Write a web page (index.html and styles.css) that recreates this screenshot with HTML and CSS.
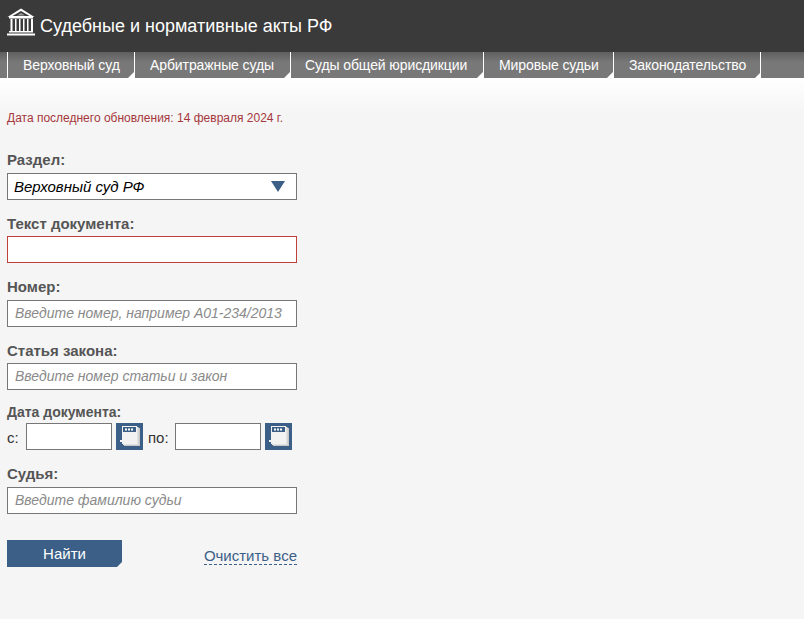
FILE: index.html
```html
<!DOCTYPE html>
<html lang="ru">
<head>
<meta charset="utf-8">
<title>Судебные и нормативные акты РФ</title>
<link rel="stylesheet" href="styles.css">
</head>
<body>
<header class="top">
  <svg class="logo" width="28" height="28" viewBox="0 0 28 28" aria-hidden="true">
    <path d="M14 .5 27.5 9H.5Z" fill="#fff"/>
    <path d="M14 3 22.5 8H5.500Z" fill="#3a3a3a"/>
    <path d="M14 5 18 7.500H10Z" fill="#fff" opacity=".5"/>
    <rect x="2" y="9" width="24" height="1.500" fill="#fff"/>
    <g fill="#fff">
      <rect x="3.500" y="11" width="2" height="12"/>
      <rect x="8" y="11" width="1.500" height="12"/>
      <rect x="12" y="11" width="1.500" height="12"/>
      <rect x="16" y="11" width="1.500" height="12"/>
      <rect x="20" y="11" width="1.500" height="12"/>
      <rect x="24" y="11" width="2" height="12"/>
      <rect x="2" y="23" width="24" height="1.500"/>
      <rect x="0" y="25.500" width="28" height="2"/>
    </g>
  </svg>
  <h1 class="title">Судебные и нормативные акты РФ</h1>
</header>
<nav class="nav">
  <a class="tab tab-1">Верховный суд</a>
  <a class="tab tab-2">Арбитражные суды</a>
  <a class="tab tab-3">Суды общей юрисдикции</a>
  <a class="tab tab-4">Мировые судьи</a>
  <a class="tab tab-5">Законодательство</a>
</nav>
<main class="content">
  <p class="updated">Дата последнего обновления: 14 февраля 2024 г.</p>
  <form class="form">
    <div class="field field-first">
      <label class="label">Раздел:</label>
      <div class="box select">
        <span>Верховный суд РФ</span>
        <svg class="arrow" width="14" height="11" viewBox="0 0 14 11" aria-hidden="true"><path d="M0 0H14L7 11Z" fill="#3b5f87"/></svg>
      </div>
    </div>
    <div class="field">
      <label class="label label-low">Текст документа:</label>
      <input class="box input input-red" type="text">
    </div>
    <div class="field field-wide">
      <label class="label">Номер:</label>
      <input class="box input" type="text" placeholder="Введите номер, например А01-234/2013">
    </div>
    <div class="field">
      <label class="label label-low">Статья закона:</label>
      <input class="box input" type="text" placeholder="Введите номер статьи и закон">
    </div>
    <div class="field field-date">
      <label class="label label-small label-low">Дата документа:</label>
      <div class="dates">
        <span class="date-from">с:</span>
        <input class="box date-input" type="text">
        <button class="cal" type="button" aria-label="Календарь">
          <svg width="27" height="27" viewBox="0 0 27 27" aria-hidden="true">
            <path d="M8 5H24V23H8Z" fill="#c8c8c8"/>
            <path d="M7 4H22.500V22H7Z" fill="#e2e2e2"/>
            <path d="M6 3H21V21H6V19H4V17H6Z" fill="#f2f2f2"/>
            <path d="M7 4H20V9H7Z" fill="#3b5f87"/>
            <path d="M9 5.500H11V7.500H9ZM12 5.500H14V7.500H12ZM15 5.500H17V7.500H15Z" fill="#fff"/>
          </svg>
        </button>
        <span class="date-to">по:</span>
        <input class="box date-input" type="text">
        <button class="cal" type="button" aria-label="Календарь">
          <svg width="27" height="27" viewBox="0 0 27 27" aria-hidden="true">
            <path d="M8 5H24V23H8Z" fill="#c8c8c8"/>
            <path d="M7 4H22.500V22H7Z" fill="#e2e2e2"/>
            <path d="M6 3H21V21H6V19H4V17H6Z" fill="#f2f2f2"/>
            <path d="M7 4H20V9H7Z" fill="#3b5f87"/>
            <path d="M9 5.500H11V7.500H9ZM12 5.500H14V7.500H12ZM15 5.500H17V7.500H15Z" fill="#fff"/>
          </svg>
        </button>
      </div>
    </div>
    <div class="field field-wide">
      <label class="label">Судья:</label>
      <input class="box input" type="text" placeholder="Введите фамилию судьи">
    </div>
    <div class="actions">
      <button class="find" type="button">Найти</button>
      <a class="clear">Очистить все</a>
    </div>
  </form>
</main>
</body>
</html>
```

FILE: styles.css
```css
* { box-sizing: border-box; }
html, body { margin: 0; height: 100%; }
body {
  font-family: "Liberation Sans", Arial, sans-serif;
  background: #f5f5f5;
  overflow: hidden;
}
.top {
  height: 52px;
  background: #3a3a3a;
  display: flex;
  align-items: flex-start;
  padding: 8px 0 0 7px;
}
.logo { flex: none; }
.title {
  margin: 8px 0 0 5px;
  font-size: 18px;
  line-height: 20px;
  font-weight: normal;
  color: #fff;
}
.nav {
  height: 26px;
  display: flex;
  padding-left: 7px;
  background: linear-gradient(#5f5f5f, #787878 40%);
}
.tab {
  position: relative;
  height: 26px;
  border-left: 1px solid #fff;
  color: #fff;
  font-size: 14px;
  line-height: 26px;
  letter-spacing: -0.1px;
  white-space: nowrap;
  padding-left: 15px;
}
.tab::after {
  content: "";
  position: absolute;
  right: 0;
  bottom: 0;
  border-style: solid;
  border-width: 0 0 6px 6px;
  border-color: transparent transparent #fff transparent;
}
.tab-1 { width: 127px; }
.tab-2 { width: 156px; }
.tab-3 { width: 193px; padding-left: 14px; }
.tab-4 { width: 130px; }
.tab-5 { width: 148px; border-right: 1px solid #fff; }
.tab-5::after { right: -1px; }
.content {
  height: 541px;
  padding: 0 7px;
  background: linear-gradient(#fff, #f5f5f5 36px);
}
.updated {
  margin: 0;
  padding-top: 33px;
  font-size: 12px;
  line-height: 14px;
  color: #a5373c;
}
.form { width: 290px; }
.field { margin-top: 15px; }
.field-first { margin-top: 27px; }
.field-wide { margin-top: 16px; }
.field-date { margin-top: 13px; }
.label {
  display: block;
  font-size: 15px;
  line-height: 16px;
  font-weight: bold;
  color: #555;
  margin-bottom: 5px;
}
.label-low { padding-top: 1px; margin-bottom: 4px; }
.label-small { font-size: 14px; }
.box {
  height: 27px;
  border: 1px solid #777;
  background: #fff;
  border-radius: 0;
  font-family: inherit;
  font-size: 14px;
}
.select {
  width: 290px;
  display: flex;
  align-items: center;
  justify-content: space-between;
  padding: 0 11px 0 6px;
  font-size: 15px;
  font-style: italic;
  color: #000;
}
.input {
  display: block;
  width: 290px;
  padding: 0 7px 2px;
  font-style: italic;
  outline: none;
}
.input::placeholder { color: #8a8a8a; opacity: 1; }
.input-red { border-color: #c0403c; }
.dates {
  display: flex;
  align-items: center;
  font-size: 15px;
  color: #333;
  margin-top: -1px;
}
.date-from { width: 19px; padding-top: 2px; }
.date-to { width: 27px; margin-left: 5px; padding-top: 2px; }
.date-input { width: 86px; outline: none; padding: 0 4px; }
.cal {
  width: 27px;
  height: 27px;
  margin-left: 4px;
  padding: 0;
  border: 0;
  background: #3b5f87;
  display: block;
}
.cal svg { display: block; }
.actions {
  display: flex;
  justify-content: space-between;
  align-items: flex-start;
  margin-top: 26px;
}
.find {
  width: 115px;
  height: 27px;
  padding: 0;
  border: 0;
  background: #3b5f87;
  color: #fff;
  font-family: inherit;
  font-size: 15px;
  clip-path: polygon(0 0, 100% 0, 100% 22px, 110px 100%, 0 100%);
}
.clear {
  margin-top: 8px;
  font-size: 15px;
  line-height: 16px;
  color: #3b5f87;
  border-bottom: 1px dashed #3b5f87;
}
```
